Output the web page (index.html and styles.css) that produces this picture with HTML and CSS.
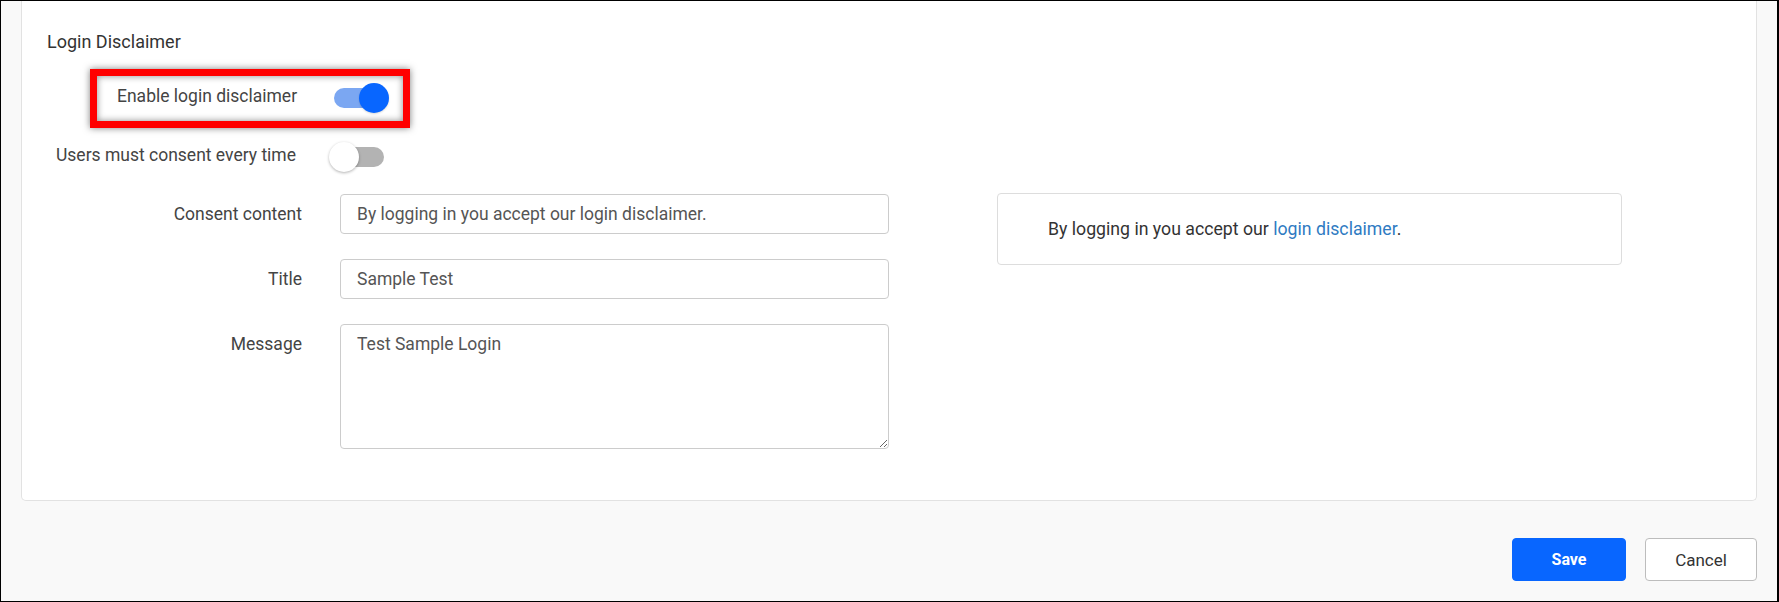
FILE: index.html
```html
<!DOCTYPE html>
<html lang="en">
<head>
<meta charset="utf-8">
<title>Login Disclaimer</title>
<link rel="stylesheet" href="styles.css">
</head>
<body>
<div class="frame">
  <div class="card">
    <div class="heading">Login Disclaimer</div>

    <div class="toggle-row highlight">
      <div class="toggle-label enable-label">Enable login disclaimer</div>
      <div class="toggle on"><span class="track"></span><span class="knob"></span></div>
    </div>

    <div class="toggle-row plain">
      <div class="toggle-label users-label">Users must consent every time</div>
      <div class="toggle off"><span class="track"></span><span class="knob"></span></div>
    </div>

    <div class="form-area">
      <div class="form-col">
        <div class="form-row">
          <label class="form-label">Consent content</label>
          <input class="text-input" type="text" value="By logging in you accept our login disclaimer.">
        </div>
        <div class="form-row">
          <label class="form-label">Title</label>
          <input class="text-input" type="text" value="Sample Test">
        </div>
        <div class="form-row">
          <label class="form-label">Message</label>
          <textarea class="text-area">Test Sample Login</textarea>
        </div>
      </div>
      <div class="preview">
        <span>By logging in you accept our <a class="link" href="#">login disclaimer</a>.</span>
      </div>
    </div>
  </div>

  <div class="footer">
    <button class="btn btn-save" type="button">Save</button>
    <button class="btn btn-cancel" type="button">Cancel</button>
  </div>
</div>
</body>
</html>
```

FILE: styles.css
```css
html, body {
  margin: 0;
  padding: 0;
  background: #ffffff;
}

.frame {
  width: 1779px;
  height: 602px;
  box-sizing: border-box;
  border: 1px solid #000;
  border-right-width: 2px;
  background: #f9f9f9;
  padding: 0 20px;
  font-family: Roboto, "Liberation Sans", Arial, sans-serif;
  overflow: hidden;
}

.card {
  background: #fff;
  border: 1px solid #e2e2e2;
  border-top: 0;
  border-radius: 0 0 5px 5px;
  padding: 31px 0 51px 0;
}

.heading {
  margin-left: 25px;
  font-size: 18px;
  font-weight: 400;
  line-height: 20px;
  color: #333;
}

.toggle-row {
  display: flex;
  align-items: flex-start;
  width: max-content;
}

.highlight {
  margin-top: 17px;
  margin-left: 68px;
  border: 7px solid #ff0000;
  padding: 7px 14px 8px 20px;
  box-shadow: 0 0 7px rgba(0, 0, 0, 0.5), inset 0 0 7px rgba(0, 0, 0, 0.45);
}

.plain {
  margin-top: 14px;
}

.toggle-label {
  font-size: 17.5px;
  line-height: 22px;
  color: #444;
  padding-top: 2px;
  text-align: right;
  white-space: nowrap;
  margin-right: 33px;
}

.enable-label {
  width: 179px;
}

.users-label {
  width: 274px;
}

.toggle {
  position: relative;
  width: 60px;
  height: 30px;
  flex: none;
}

.track {
  position: absolute;
  left: 5px;
  top: 5px;
  width: 50px;
  height: 20px;
  border-radius: 10px;
}

.knob {
  position: absolute;
  top: 0;
  width: 30px;
  height: 30px;
  border-radius: 50%;
}

.on .track {
  background: #7ba7f2;
}

.on .knob {
  right: 0;
  background: #0866ff;
  box-shadow: 0 1px 2px rgba(0, 0, 0, 0.15);
}

.off .track {
  background: #b3b3b3;
}

.off .knob {
  left: 0;
  background: #fff;
  box-shadow: 0 1px 3px rgba(0, 0, 0, 0.3);
}

.form-area {
  display: flex;
  align-items: flex-start;
  margin-top: 22px;
}

.form-col {
  display: flex;
  flex-direction: column;
  gap: 25px;
  width: 867px;
}

.form-row {
  display: flex;
  align-items: flex-start;
}

.form-label {
  width: 280px;
  margin-right: 38px;
  padding-top: 9px;
  font-size: 17.5px;
  line-height: 22px;
  color: #444;
  text-align: right;
  white-space: nowrap;
}

.text-input,
.text-area {
  box-sizing: border-box;
  width: 549px;
  margin: 0;
  border: 1px solid #cccccc;
  border-radius: 4px;
  background: #fff;
  font-family: Roboto, "Liberation Sans", Arial, sans-serif;
  font-size: 17.5px;
  color: #555;
  padding: 0 16px;
  outline: none;
}

.text-input {
  height: 40px;
  line-height: 22px;
}

.text-area {
  height: 125px;
  line-height: 22px;
  padding-top: 8px;
  padding-bottom: 8px;
  resize: vertical;
  display: block;
}

.preview {
  box-sizing: border-box;
  margin-left: 108px;
  margin-top: -1px;
  width: 625px;
  height: 72px;
  border: 1px solid #dddddd;
  border-radius: 4px;
  padding: 0 50px;
  display: flex;
  align-items: center;
  font-size: 17.7px;
  line-height: 22px;
  color: #333;
}

.link {
  color: #2f7bc2;
  text-decoration: none;
}

.footer {
  display: flex;
  justify-content: flex-end;
  gap: 19px;
  margin-top: 37px;
}

.btn {
  box-sizing: border-box;
  height: 43px;
  border-radius: 4px;
  font-family: Roboto, "Liberation Sans", Arial, sans-serif;
  cursor: pointer;
  margin: 0;
}

.btn-save {
  width: 114px;
  background: #0866ff;
  border: 1px solid #0866ff;
  color: #fff;
  font-size: 16px;
  font-weight: 700;
}

.btn-cancel {
  width: 112px;
  background: #fff;
  border: 1px solid #bdbdbd;
  color: #333;
  font-size: 17px;
}
```
